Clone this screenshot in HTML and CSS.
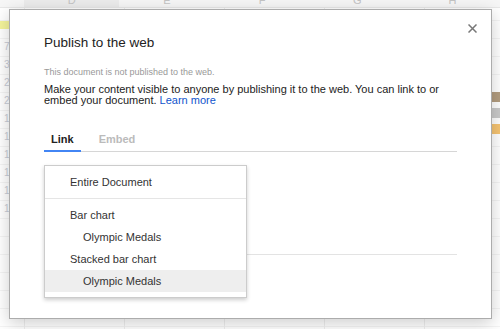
FILE: index.html
```html
<!DOCTYPE html>
<html lang="en">
<head>
    <meta charset="UTF-8">
    <meta name="viewport" content="width=device-width, initial-scale=1.0">
    <title>Publish to the web</title>
    <link rel="stylesheet" href="styles.css">
</head>
<body>
    <!-- Spreadsheet behind the dialog -->
    <div class="sheet">
        <div class="col-heads">
            <span class="col selected">D</span>
            <span class="col">E</span>
            <span class="col">F</span>
            <span class="col">G</span>
            <span class="col">H</span>
        </div>
        <div class="sheet-body">
            <div class="row-heads">
                <div class="row-sel"></div>
                <div class="row-nums">
                    <div>7</div>
                    <div>3</div>
                    <div>2</div>
                    <div>2</div>
                    <div>1</div>
                    <div>1</div>
                    <div>1</div>
                    <div>1</div>
                    <div>1</div>
                    <div>1</div>
                </div>
            </div>
            <div class="swatches">
                <div class="swatch brown"></div>
                <div class="swatch grey"></div>
                <div class="swatch orange"></div>
            </div>
        </div>
    </div>

    <div class="dialog">
        <button class="close" title="Close">
            <svg width="9" height="9" viewBox="0 0 9 9">
                <path d="M0.5 0.5 L8.5 8.5 M8.5 0.5 L0.5 8.5" stroke="#777" stroke-width="1.5" fill="none"/>
            </svg>
        </button>
        <h1 class="title">Publish to the web</h1>
        <p class="status">This document is not published to the web.</p>
        <p class="intro">Make your content visible to anyone by publishing it to the web. You can link to or embed your document. <a href="#">Learn more</a></p>

        <div class="tabs">
            <span class="tab active">Link</span>
            <span class="tab">Embed</span>
        </div>
        <div class="link-pane"></div>

        <div class="menu">
            <div class="menu-item">Entire Document</div>
            <div class="menu-sep"></div>
            <div class="menu-item">Bar chart</div>
            <div class="menu-item sub">Olympic Medals</div>
            <div class="menu-item">Stacked bar chart</div>
            <div class="menu-item sub hover">Olympic Medals</div>
        </div>
    </div>
</body>
</html>
```

FILE: styles.css
```css
body {
    margin: 0;
    font-family: "Liberation Sans", Arial, sans-serif;
    background-color: #ffffff;
}
.sheet {
    width: 500px;
    height: 329px;
    overflow: hidden;
    background-color: #ffffff;
    background-image:
        linear-gradient(to right, #efefef 1px, transparent 1px),
        linear-gradient(#f4f4f4 1px, transparent 1px);
    background-size: 100px 100%, 100% 18px;
    background-position: 24px 0, 0 38px;
}
.col-heads {
    display: flex;
    height: 7px;
    padding-left: 24px;
    background-color: #f6f6f6;
    border-bottom: 1px solid #e8e8e8;
}
.col {
    width: 100px;
    text-align: center;
    font-size: 11px;
    line-height: 0;
    color: #c4c4c4;
}
.col.selected {
    background-color: #ececec;
}
.sheet-body {
    display: flex;
    justify-content: space-between;
}
.row-heads {
    width: 24px;
}
.row-sel {
    margin-top: 13px;
    height: 8px;
    background-color: #f4f49c;
}
.row-nums {
    margin-top: 9px;
}
.row-nums div {
    height: 18px;
    line-height: 18px;
    padding-left: 4px;
    font-size: 10px;
    color: #c8ccd6;
}
.swatches {
    display: flex;
    flex-direction: column;
    gap: 6px;
    padding-top: 84px;
    width: 8px;
}
.swatch {
    height: 10px;
}
.swatch.brown {
    background-color: #b39d80;
}
.swatch.grey {
    background-color: #cacaca;
}
.swatch.orange {
    background-color: #f6c472;
}
.dialog {
    position: absolute;
    top: 9px;
    left: 9px;
    width: 483px;
    height: 310px;
    box-sizing: border-box;
    padding: 0 34px;
    background-color: #ffffff;
    border: 1px solid #acacac;
    box-shadow: 0 4px 16px rgba(0, 0, 0, 0.2);
}
.close {
    position: absolute;
    top: 14px;
    right: 14px;
    width: 9px;
    height: 9px;
    padding: 0;
    border: none;
    background: none;
    display: flex;
    cursor: pointer;
}
.title {
    margin: 25px 0 0;
    font-size: 13.5px;
    line-height: 16px;
    font-weight: normal;
    color: #222222;
}
.status {
    margin: 16px 0 0;
    font-size: 9px;
    line-height: 11px;
    color: #999999;
}
.intro {
    margin: 6px 0 0;
    font-size: 11px;
    line-height: 11px;
    color: #222222;
}
.intro a {
    color: #1155cc;
    text-decoration: none;
}
.tabs {
    display: flex;
    margin-top: 27px;
    border-bottom: 1px solid #d6d6d6;
}
.tab {
    padding: 0 7px 4px;
    margin-right: 11px;
    margin-bottom: -1px;
    border-bottom: 2px solid transparent;
    font-size: 11px;
    line-height: 13px;
    font-weight: bold;
    color: #bbbbbb;
}
.tab.active {
    color: #222222;
    border-bottom-color: #4285f4;
}
.link-pane {
    height: 102px;
    border-bottom: 1px solid #e3e3e3;
}
.menu {
    position: absolute;
    top: 155px;
    left: 34px;
    width: 203px;
    box-sizing: border-box;
    padding: 5px 0;
    background-color: #ffffff;
    border: 1px solid #cccccc;
    box-shadow: 0 2px 4px rgba(0, 0, 0, 0.2);
}
.menu-item {
    height: 22px;
    line-height: 22px;
    padding-left: 25px;
    font-size: 11px;
    color: #333333;
}
.menu-item.sub {
    padding-left: 38px;
}
.menu-item.hover {
    background-color: #eeeeee;
}
.menu-sep {
    margin: 5px 0;
    border-top: 1px solid #e5e5e5;
}
```
